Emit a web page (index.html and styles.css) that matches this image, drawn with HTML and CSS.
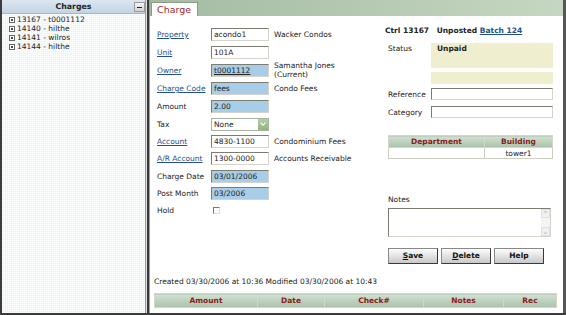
FILE: index.html
```html
<!DOCTYPE html>
<html lang="en">
  <head>
    <meta charset="UTF-8" />
    <title>Charges</title>
    <link rel="stylesheet" href="styles.css">
  </head>
  <body>
    <div class="app">
      <!-- 왼쪽 목록 -->
      <aside class="side">
        <div class="side-head">
          <span>Charges</span>
          <span class="min-button"></span>
        </div>
        <ul class="charge-list">
          <li><i class="node"></i>13167 - t0001112</li>
          <li><i class="node"></i>14140 - hilthe</li>
          <li><i class="node"></i>14141 - wilros</li>
          <li><i class="node"></i>14144 - hilthe</li>
        </ul>
      </aside>
      <div class="splitter"></div>

      <main class="main">
        <div class="tab-bar">
          <div class="tab">Charge</div>
        </div>

        <div class="form">
          <div class="fields">
            <a class="link">Property</a><div class="field">acondo1</div><span>Wacker Condos</span>
            <a class="link">Unit</a><div class="field">101A</div><span></span>
            <a class="link">Owner</a><div class="field blue"><u>t0001112</u></div><span class="two-line">Samantha Jones<br>(Current)</span>
            <a class="link">Charge Code</a><div class="field blue">fees</div><span>Condo Fees</span>
            <span>Amount</span><div class="field blue">2.00</div><span></span>
            <span>Tax</span><div class="field select">None<i class="drop"></i></div><span></span>
            <a class="link">Account</a><div class="field">4830-1100</div><span>Condominium Fees</span>
            <a class="link">A/R Account</a><div class="field">1300-0000</div><span>Accounts Receivable</span>
            <span>Charge Date</span><div class="field blue">03/01/2006</div><span></span>
            <span>Post Month</span><div class="field blue">03/2006</div><span></span>
            <span>Hold</span><div><i class="check"></i></div><span></span>
          </div>

          <div class="info">
            <div class="ctrl">Ctrl 13167 <span class="gap">Unposted</span> <a class="link">Batch 124</a></div>
            <div class="pair status">
              <span class="status-label">Status</span>
              <div class="status-box"><b>Unpaid</b></div>
              <div class="status-box small"></div>
            </div>
            <div class="pair ref">
              <span>Reference</span><div class="field wide"></div>
            </div>
            <div class="pair cat">
              <span>Category</span><div class="field wide"></div>
            </div>

            <table class="dept">
              <tr><th class="c-dept">Department</th><th>Building</th></tr>
              <tr><td></td><td class="center">tower1</td></tr>
            </table>

            <div class="notes-label">Notes</div>
            <div class="notes">
              <div class="scroll"><i>&#8963;</i><i>&#8964;</i></div>
            </div>

            <div class="buttons">
              <span class="btn"><u>S</u>ave</span>
              <span class="btn"><u>D</u>elete</span>
              <span class="btn">Help</span>
            </div>
          </div>
        </div>

        <p class="stamp">Created 03/30/2006 at 10:36 Modified 03/30/2006 at 10:43</p>
        <table class="payments">
          <tr>
            <th class="c-amount">Amount</th>
            <th class="c-date">Date</th>
            <th class="c-check">Check#</th>
            <th class="c-notes">Notes</th>
            <th>Rec</th>
          </tr>
        </table>
      </main>
    </div>
  </body>
</html>
```

FILE: styles.css
```css
/* 기본 초기화 */
* {
  margin: 0;
  padding: 0;
  box-sizing: border-box;
}

body {
  font-family: "DejaVu Sans", Verdana, sans-serif;
  font-size: 7.5px;
  color: #222;
  background: #fff;
  width: 566px;
  height: 315px;
  overflow: hidden;
}

.app {
  display: flex;
  height: 315px;
  border-left: 2px solid #3c3c3c;
  border-bottom: 2px solid #3c3c3c;
}

/* 왼쪽 패널 */
.side {
  width: 143px;
  background-color: #edf2f3;
  background-image: linear-gradient(90deg, rgba(255, 255, 255, 0.5) 1px, transparent 1px),
    linear-gradient(rgba(255, 255, 255, 0.5) 1px, transparent 1px);
  background-size: 2px 2px;
}

.side-head {
  position: relative;
  height: 14px;
  background: linear-gradient(#dbe6f0, #c4d4e4);
  border-bottom: 1px solid #a9b6c2;
  text-align: center;
  font-weight: bold;
  font-size: 7.8px;
  line-height: 13px;
}

.min-button {
  position: absolute;
  top: 2px;
  right: 0;
  width: 11px;
  height: 10px;
  background: linear-gradient(#f4f4f4, #d2d2d2);
  border: 1px solid #9a9a9a;
}

.min-button::after {
  content: "";
  position: absolute;
  left: 2px;
  top: 4px;
  width: 5px;
  height: 1px;
  background: #222;
}

.charge-list {
  list-style: none;
  padding: 1px 0 0 7px;
}

.charge-list li {
  height: 9px;
  line-height: 9px;
  display: flex;
  align-items: center;
}

.node {
  display: inline-block;
  width: 6px;
  height: 6px;
  border: 1px solid #666;
  background: radial-gradient(#444 0.7px, #fff 1px);
  margin-right: 2px;
}

.splitter {
  width: 5px;
  background: linear-gradient(to right, #9a9a9a 0 1px, #e0e0e0 1px 2px, #3a3a3a 2px 4px, #9a9a9a 4px 5px);
}

/* 오른쪽 본문 */
.main {
  width: 416px;
  border-right: 3px solid #555;
}

.tab-bar {
  height: 16px;
  background: linear-gradient(to right, #a4bba2, #c6d6c2);
  padding: 2px 0 0 1px;
}

.tab {
  width: 47px;
  height: 14px;
  background: #fff;
  border: 1px solid #8c9a8a;
  border-bottom: none;
  color: #9a2a2a;
  font-size: 9.5px;
  line-height: 13px;
  padding-left: 5px;
}

.form {
  display: flex;
  padding: 9px 0 0 7px;
}

.fields {
  width: 231px;
  display: grid;
  grid-template-columns: 49px 58px auto;
  grid-template-rows: 18px 18px 18px 19px 17px 18px 17px 17px 18px 17px 16px;
  column-gap: 5px;
  align-items: center;
}

.link {
  color: #24508f;
  text-decoration: underline;
  white-space: nowrap;
}

.field {
  height: 13px;
  line-height: 11px;
  padding-left: 2px;
  background: #fff;
  border: 1px solid;
  border-color: #7c7c72 #d4d4cc #d4d4cc #7c7c72;
  white-space: nowrap;
  overflow: hidden;
}

.field.blue {
  background: #a8cde6;
}

.field.select {
  position: relative;
  border-color: #a5b49e;
  line-height: 11px;
}

.drop {
  position: absolute;
  right: 0;
  top: 0;
  width: 10px;
  height: 11px;
  background: linear-gradient(#b3cfa4, #93b383);
}

.drop::after {
  content: "";
  position: absolute;
  left: 3px;
  top: 2px;
  width: 3px;
  height: 3px;
  border-right: 1.5px solid #fff;
  border-bottom: 1.5px solid #fff;
  transform: rotate(45deg);
}

.two-line {
  line-height: 9.5px;
}

.check {
  display: block;
  margin-left: 2px;
  width: 7px;
  height: 7px;
  border: 1px solid;
  border-color: #777 #ddd #ddd #777;
}

/* 오른쪽 정보 영역 */
.info {
  width: 166px;
  padding-top: 1px;
}

.ctrl {
  font-weight: bold;
  line-height: 10px;
  margin-left: -3px;
  white-space: nowrap;
}

.gap {
  margin-left: 5px;
}

.pair {
  display: grid;
  grid-template-columns: 43px 122px;
  align-items: center;
}

.status {
  margin-top: 7px;
  row-gap: 4px;
  align-items: start;
}

.status-label {
  padding-top: 1px;
}

.status-box {
  height: 25px;
  background: #efefcf;
  padding: 1px 6px;
}

.status-box.small {
  grid-column: 2;
  height: 12px;
}

.ref {
  margin-top: 4px;
}

.cat {
  margin-top: 6px;
}

.field.wide {
  height: 12px;
}

.dept {
  margin-top: 17px;
  width: 165px;
  border-collapse: collapse;
  border: 1px solid #cdcdc0;
}

.dept th,
.payments th {
  height: 12px;
  background: linear-gradient(#d2e0d2, #a9c2aa);
  color: #8b1a1a;
  font-weight: bold;
  border: 1px solid #d6d6c8;
  padding: 0;
}

.dept td {
  height: 11px;
  border: 1px solid #cdcdc0;
  padding: 0;
}

.c-dept {
  width: 96px;
}

.center {
  text-align: center;
}

.notes-label {
  margin-top: 36px;
  line-height: 10px;
}

.notes {
  margin-top: 3px;
  width: 163px;
  height: 29px;
  border: 1px solid;
  border-color: #7c7c72 #d4d4cc #d4d4cc #7c7c72;
  display: flex;
  justify-content: flex-end;
}

.scroll {
  width: 9px;
  display: flex;
  flex-direction: column;
  justify-content: space-between;
  background: #f4f4f4;
}

.scroll i {
  font-style: normal;
  height: 9px;
  line-height: 9px;
  font-size: 7px;
  text-align: center;
  color: #aaa;
  background: #f0f0f0;
  border: 1px solid #e0e0e0;
}

.buttons {
  display: flex;
  gap: 2px;
  margin-top: 11px;
}

.btn {
  width: 50px;
  height: 16px;
  line-height: 14px;
  text-align: center;
  font-weight: bold;
  color: #111;
  border: 1px solid #3a3a3a;
  border-top-color: #888;
  border-left-color: #888;
  background: linear-gradient(#fdfdfd, #c8c8c8);
}

.btn + .btn {
  margin-left: 1px;
}

/* 하단 */
.stamp {
  margin: 13px 0 0 4px;
  line-height: 10px;
}

.payments {
  margin: 6px 0 0 4px;
  width: 403px;
  border-collapse: collapse;
  border: 1px solid #d6d6c8;
}

.payments th {
  height: 14px;
}

.c-amount {
  width: 103px;
}

.c-date {
  width: 67px;
}

.c-check {
  width: 99px;
}

.c-notes {
  width: 80px;
}
```
